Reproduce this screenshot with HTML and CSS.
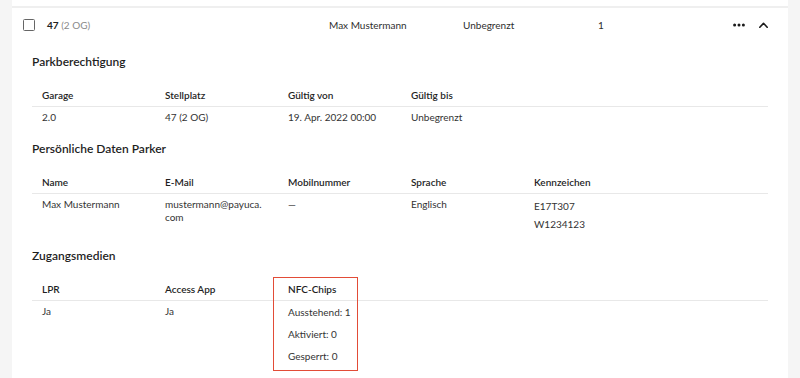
FILE: index.html
```html
<!DOCTYPE html>
<html lang="de">
<head>
<meta charset="utf-8">
<title>Parkberechtigung</title>
<link rel="stylesheet" href="styles.css">
</head>
<body>
<div class="page">
  <div class="prev-row"></div>
  <div class="row">
    <span class="checkbox"></span>
    <span class="col col-slot"><b>47</b> <span class="muted">(2 OG)</span></span>
    <span class="col col-name">Max Mustermann</span>
    <span class="col col-valid">Unbegrenzt</span>
    <span class="col col-count">1</span>
    <span class="actions">
      <svg class="icon-dots" width="12" height="4" viewBox="0 0 12 4"><circle cx="1.6" cy="2" r="1.5"/><circle cx="6" cy="2" r="1.5"/><circle cx="10.4" cy="2" r="1.5"/></svg>
      <svg class="icon-caret" width="9" height="6" viewBox="0 0 9 6"><path d="M0.8 5.2 L4.5 1.3 L8.2 5.2"/></svg>
    </span>
  </div>

  <div class="details">
    <section class="section">
      <h3 class="section-title">Parkberechtigung</h3>
      <div class="table">
        <div class="thead cols">
          <div class="th">Garage</div>
          <div class="th">Stellplatz</div>
          <div class="th">Gültig von</div>
          <div class="th">Gültig bis</div>
        </div>
        <div class="tbody cols">
          <div class="td">2.0</div>
          <div class="td">47 (2 OG)</div>
          <div class="td">19. Apr. 2022 00:00</div>
          <div class="td">Unbegrenzt</div>
        </div>
      </div>
    </section>

    <section class="section section-wide">
      <h3 class="section-title">Persönliche Daten Parker</h3>
      <div class="table">
        <div class="thead cols">
          <div class="th">Name</div>
          <div class="th">E-Mail</div>
          <div class="th">Mobilnummer</div>
          <div class="th">Sprache</div>
          <div class="th">Kennzeichen</div>
        </div>
        <div class="tbody cols">
          <div class="td">Max Mustermann</div>
          <div class="td td-wrap">mustermann@payuca.<br>com</div>
          <div class="td">—</div>
          <div class="td">Englisch</div>
          <div class="td td-stack plates">
            <span>E17T307</span>
            <span>W1234123</span>
          </div>
        </div>
      </div>
    </section>

    <section class="section">
      <h3 class="section-title">Zugangsmedien</h3>
      <div class="table">
        <div class="thead cols">
          <div class="th">LPR</div>
          <div class="th">Access App</div>
          <div class="th">NFC-Chips</div>
        </div>
        <div class="tbody cols">
          <div class="td">Ja</div>
          <div class="td">Ja</div>
          <div class="td td-stack chips">
            <span>Ausstehend: 1</span>
            <span>Aktiviert: 0</span>
            <span>Gesperrt: 0</span>
          </div>
        </div>
        <div class="highlight"></div>
      </div>
    </section>
  </div>
</div>
</body>
</html>
```

FILE: styles.css
```css
* { box-sizing: border-box; }

html, body {
  margin: 0;
  padding: 0;
  background: #f5f5f5;
  font-family: Lato, "Open Sans", sans-serif;
  font-size: 10px;
  line-height: 16px;
  color: #333333;
}

.page {
  margin-left: 12px;
  width: 776px;
  min-height: 378px;
  background: #ffffff;
}

.prev-row {
  height: 8px;
  border-bottom: 2px solid #efefef;
}

.row {
  display: flex;
  align-items: center;
  height: 34px;
  padding: 0 20px 0 11px;
  color: #2e2e2e;
}

.checkbox {
  width: 12px;
  height: 12px;
  border: 1.5px solid #666666;
  border-radius: 1.5px;
  margin-right: 12px;
  flex: none;
}

.col { flex: none; white-space: nowrap; }
.col-slot { width: 282px; }
.col-slot b { font-weight: 700; color: #222222; }
.muted { color: #8a8a8a; }
.col-name { width: 134px; }
.col-valid { width: 135px; }
.col-count { width: 40px; }

.actions {
  margin-left: auto;
  display: flex;
  align-items: center;
  gap: 14px;
}

.icon-dots { fill: #1a1a1a; display: block; }
.icon-caret {
  display: block;
  fill: none;
  stroke: #1a1a1a;
  stroke-width: 1.6;
  stroke-linecap: round;
  stroke-linejoin: round;
}

.details {
  padding: 11px 20px 0 20px;
}

.section { margin-bottom: 11px; }

.section-title {
  margin: 0 0 12px 0;
  font-size: 12px;
  line-height: 18px;
  font-weight: 600;
  color: #1f1f1f;
}

.table { position: relative; }

.thead, .tbody { display: grid; }
.cols { grid-template-columns: repeat(5, 123px) 1fr; }

.thead { border-bottom: 1px solid #e8e8e8; }

.th {
  padding: 4px 10px 3px 10px;
  font-weight: 600;
  color: #1f1f1f;
}

.td {
  padding: 2px 10px 4px 10px;
  color: #333333;
}

.td-wrap { line-height: 13px; padding-top: 4px; }

.td-stack {
  display: flex;
  flex-direction: column;
}
.plates { gap: 2px; padding-top: 4px; }
.chips { gap: 6px; padding-top: 3px; }

.highlight {
  position: absolute;
  left: 241px;
  top: 0;
  width: 85px;
  height: 94px;
  border: 1.5px solid #e24c37;
  pointer-events: none;
}
```
